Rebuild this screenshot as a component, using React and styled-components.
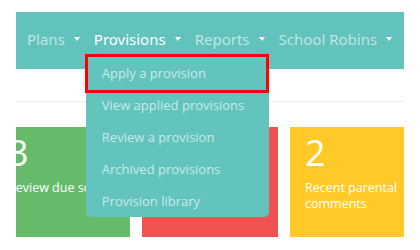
import React from 'react';
import styled, { createGlobalStyle } from 'styled-components';

const GlobalStyle = createGlobalStyle`
  body {
    margin: 0;
    background: #fff;
    font-family: "Open Sans", "Liberation Sans", sans-serif;
  }
`;

const menu = ['Plans', 'Provisions', 'Reports', 'School Robins'];
const provisionLinks = [
  'Apply a provision',
  'View applied provisions',
  'Review a provision',
  'Archived provisions',
  'Provision library',
];

export default function App() {
  return (
    <Page>
      <GlobalStyle />
      <Navbar>
        {menu.map((label) => (
          <NavItem key={label} active={label === 'Provisions'}>
            {label}
            <Caret />
            {label === 'Provisions' && (
              <Dropdown>
                {provisionLinks.map((link, i) => (
                  <DropItem key={link} highlighted={i === 0}>
                    {link}
                  </DropItem>
                ))}
              </Dropdown>
            )}
          </NavItem>
        ))}
      </Navbar>
      <Divider />
      <Cards>
        <Card color="#66bb6a">
          <CardBody shift={-23}>
            <Count>3</Count>
            <Label>Review due soon</Label>
          </CardBody>
        </Card>
        <Card color="#ef5350" />
        <Card color="#ffca28">
          <CardBody>
            <Count>2</Count>
            <Label>Recent parental comments</Label>
          </CardBody>
        </Card>
      </Cards>
    </Page>
  );
}

const Page = styled.div`
  width: 420px;
  height: 250px;
  padding: 12px 16px 0;
  box-sizing: border-box;
  overflow: hidden;
`;

const Navbar = styled.nav`
  display: flex;
  align-items: center;
  height: 57px;
  padding-left: 11px;
  background-color: #62c2bc;
`;

const NavItem = styled.div`
  position: relative;
  display: flex;
  align-items: center;
  height: 100%;
  box-sizing: border-box;
  padding-bottom: 4px;
  margin-right: 14px;
  font-family: "Noto Sans", "Open Sans", sans-serif;
  font-size: 15px;
  color: ${(p) => (p.active ? '#ffffff' : '#bde7e3')};
  white-space: nowrap;
`;

const Caret = styled.span`
  display: inline-block;
  margin-left: 9px;
  margin-top: 1px;
  border-left: 3px solid transparent;
  border-right: 3px solid transparent;
  border-top: 4px solid #ffffff;
`;

const Dropdown = styled.div`
  position: absolute;
  top: 43px;
  left: -8px;
  width: 183px;
  padding-top: 2px;
  background-color: #63c3bd;
  border-radius: 0 0 5px 5px;
  z-index: 5;
`;

const DropItem = styled.div`
  position: relative;
  height: 32px;
  line-height: 32px;
  padding-left: 16px;
  font-family: "Open Sans", sans-serif;
  font-size: 13px;
  color: #c6ebe8;

  ${(p) =>
    p.highlighted &&
    `
    &::after {
      content: '';
      position: absolute;
      top: -3px;
      left: -1px;
      right: 0;
      bottom: -4px;
      border: 3px solid #ff0000;
    }
  `}
`;

const Divider = styled.div`
  height: 1px;
  margin-top: 32px;
  background-color: #eeeeee;
`;

const Cards = styled.div`
  display: grid;
  grid-template-columns: 114px 136px 1fr;
  column-gap: 12px;
  margin-top: 25px;
`;

const Card = styled.div`
  height: 110px;
  overflow: hidden;
  background-color: ${(p) => p.color};
`;

const CardBody = styled.div`
  padding: 3px 4px 0 15px;
  margin-left: ${(p) => p.shift || 0}px;
  color: #ffffff;
  white-space: ${(p) => (p.shift ? 'nowrap' : 'normal')};
`;

const Count = styled.div`
  font-family: "Open Sans", sans-serif;
  font-size: 36px;
  line-height: 46px;
`;

const Label = styled.div`
  font-family: "Open Sans", sans-serif;
  font-size: 12.5px;
  line-height: 16px;
  margin-top: 4px;
`;
